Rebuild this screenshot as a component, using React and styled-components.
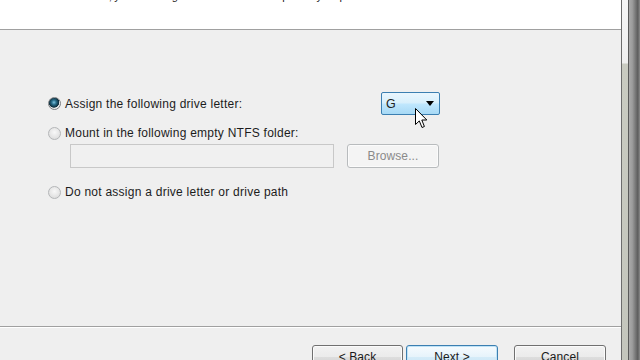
import React from "react";
import styled, { createGlobalStyle } from "styled-components";

const GlobalStyle = createGlobalStyle`
  html, body {
    margin: 0;
    padding: 0;
    background: #efefef;
  }
  body {
    font-family: "Liberation Sans", Arial, sans-serif;
    font-size: 12px;
    color: #000;
  }
`;

const App = () => {
  return (
    <StPage>
      <GlobalStyle />
      <StDialog>
        <StHeader>
          <StSubtitle>
            For easier access, you can assign a drive letter or drive path to your partition.
          </StSubtitle>
        </StHeader>

        <StBody>
          <StRow>
            <StOption width="333px">
              <StRadio checked />
              <span>Assign the following drive letter:</span>
            </StOption>
            <StSelect>
              <span>G</span>
              <StArrow />
            </StSelect>
          </StRow>

          <StRow gap="10px">
            <StOption>
              <StRadio />
              <span>Mount in the following empty NTFS folder:</span>
            </StOption>
          </StRow>

          <StFolderRow>
            <StInput />
            <StButton disabled width="92px">
              Browse...
            </StButton>
          </StFolderRow>

          <StRow gap="16px">
            <StOption>
              <StRadio />
              <span>Do not assign a drive letter or drive path</span>
            </StOption>
          </StRow>
        </StBody>

        <StSeparator />

        <StFooter>
          <StButton width="91px">&lt; Back</StButton>
          <StButton primary width="92px">
            Next &gt;
          </StButton>
          <StButton width="92px" spaced>
            Cancel
          </StButton>
        </StFooter>
      </StDialog>

      <StFrame>
        <StFrameInner />
        <StFrameOuter />
      </StFrame>

      {/* mouse pointer hovering over the drive list */}
      <StCursor width="13" height="21" viewBox="0 0 13 21">
        <path
          d="M0.5 0.5 L0.5 16.5 L4.3 12.9 L7 19.5 L9.4 18.5 L6.8 12 L11.8 12 Z"
          fill="#fff"
          stroke="#000"
          strokeWidth="1"
          strokeLinejoin="round"
        />
      </StCursor>
    </StPage>
  );
};

export default App;

const StPage = styled.div`
  position: relative;
  display: flex;
  width: 640px;
  height: 360px;
  overflow: hidden;
  background: #efefef;
`;

const StDialog = styled.div`
  width: 621px;
  height: 360px;
  display: flex;
  flex-direction: column;
  background: #efefef;
`;

const StHeader = styled.div`
  height: 29px;
  background: #fff;
  border-bottom: 1px solid #a0a0a0;
  overflow: hidden;
  flex-shrink: 0;
`;

const StSubtitle = styled.div`
  margin-top: -10px;
  padding-left: 27px;
  line-height: 12px;
  font-size: 11px;
  letter-spacing: -0.3px;
  color: #222;
  white-space: nowrap;
`;

const StBody = styled.div`
  flex: 1;
  padding: 62px 0 0 48px;
  display: flex;
  flex-direction: column;
`;

const StRow = styled.div`
  display: flex;
  align-items: center;
  margin-top: ${({ gap }) => gap || "0"};
  min-height: 16px;
`;

const StOption = styled.label`
  display: flex;
  align-items: center;
  gap: 4px;
  width: ${({ width }) => width || "auto"};
  line-height: 16px;
  font-size: 12px;
  letter-spacing: 0.25px;
  color: #1c1c1c;
`;

const StRadio = styled.span`
  width: 13px;
  height: 13px;
  border-radius: 50%;
  box-sizing: border-box;
  flex-shrink: 0;
  border: 1px solid ${({ checked }) => (checked ? "#7c7f82" : "#b4b6b8")};
  background: ${({ checked }) =>
    checked
      ? "radial-gradient(circle at 45% 40%, #7fc4e0 0, #2a6f8c 25%, #0e2c3a 55%, #e8e8e8 62%, #f6f6f6 100%)"
      : "radial-gradient(circle at 50% 40%, #f8f8f8 0, #e4e4e4 60%, #d6d6d6 100%)"};
`;

const StSelect = styled.div`
  width: 59px;
  height: 23px;
  box-sizing: border-box;
  border: 1px solid #3c7fb1;
  border-radius: 2px;
  background: linear-gradient(to bottom, #eaf6fd 0%, #d9f0fc 45%, #bee6fd 55%, #a7d9f5 100%);
  display: flex;
  align-items: center;
  justify-content: space-between;
  padding: 0 4px 0 4px;
  font-size: 12.5px;
  color: #222;
`;

const StArrow = styled.span`
  width: 0;
  height: 0;
  border-left: 4px solid transparent;
  border-right: 4px solid transparent;
  border-top: 5px solid #000;
  margin-right: 1px;
`;

const StFolderRow = styled.div`
  display: flex;
  align-items: center;
  margin-top: 3px;
  padding-left: 22px;
  gap: 13px;
`;

const StInput = styled.div`
  width: 264px;
  height: 24px;
  box-sizing: border-box;
  border: 1px solid #c8c8c8;
  background: #f0f0f0;
`;

const StButton = styled.button`
  width: ${({ width }) => width};
  height: 24px;
  box-sizing: border-box;
  margin-left: ${({ spaced }) => (spaced ? "13px" : "0")};
  border: 1px solid ${({ primary, disabled }) => (primary ? "#3c7fb1" : disabled ? "#b8bbbd" : "#707070")};
  border-radius: 3px;
  font-family: "Liberation Sans", Arial, sans-serif;
  font-size: 12px;
  letter-spacing: 0.1px;
  color: ${({ disabled }) => (disabled ? "#8a8a8a" : "#1a1a1a")};
  background: ${({ primary, disabled }) =>
    disabled
      ? "#f4f4f4"
      : primary
      ? "linear-gradient(to bottom, #f6fbfe 0%, #e6f3fb 50%, #d4ebf8 51%, #c6e4f6 100%)"
      : "linear-gradient(to bottom, #f2f2f2 0%, #ebebeb 50%, #dddddd 51%, #cfcfcf 100%)"};
  box-shadow: ${({ primary }) => (primary ? "inset 0 0 0 1px #bfe3f7" : "inset 0 0 0 1px #fbfbfb")};
  padding: 0;
`;

const StSeparator = styled.div`
  height: 1px;
  background: #a0a0a0;
  border-bottom: 1px solid #fff;
  flex-shrink: 0;
`;

const StFooter = styled.div`
  height: 32px;
  flex-shrink: 0;
  display: flex;
  align-items: flex-start;
  padding: 17px 0 0 312px;
  box-sizing: border-box;
  gap: 3px;
  overflow: hidden;
`;

const StFrame = styled.div`
  flex: 1;
  display: flex;
  border-left: 1px solid #6c6c6c;
`;

const StFrameInner = styled.div`
  width: 6px;
  background: linear-gradient(to bottom, #f6f6f6 0, #f0f0f0 63px, #c9cbc1 64px, #c4c6bd 100%);
  border-right: 1px solid #5a5a5a;
`;

const StFrameOuter = styled.div`
  flex: 1;
  background: linear-gradient(to right, #a9a9a9 0%, #9c9c9c 30%, #7c7c7c 55%, #5d5d5d 80%, #8a8a8a 100%);
`;

const StCursor = styled.svg`
  position: absolute;
  left: 415px;
  top: 108px;
`;
